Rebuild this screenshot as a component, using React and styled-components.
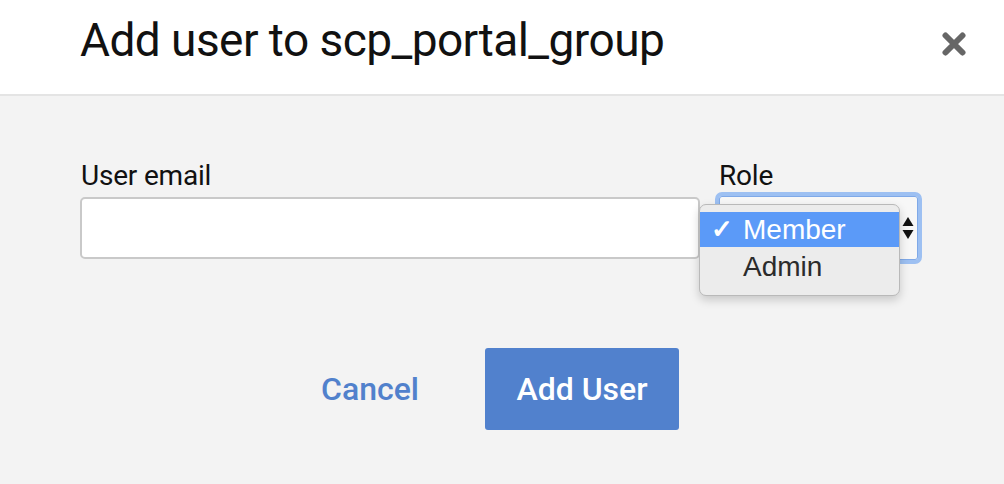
import React from "react";
import styled, { createGlobalStyle } from "styled-components";

const Global = createGlobalStyle`
  html, body { margin: 0; padding: 0; background: #f3f3f3; }
  body { font-family: Roboto, "Noto Sans", sans-serif; }
  * { box-sizing: border-box; }
`;

const Dialog = styled.div`
  width: 1004px;
  height: 484px;
  display: flex;
  flex-direction: column;
  background: #f3f3f3;
  overflow: hidden;
`;

const Header = styled.header`
  height: 96px;
  background: #fff;
  border-bottom: 2px solid #e4e4e4;
  display: flex;
  align-items: flex-start;
  justify-content: space-between;
  padding: 13px 38px 0 80px;
`;

const Title = styled.h1`
  margin: 0;
  font-family: Roboto, sans-serif;
  font-weight: 400;
  font-size: 46px;
  line-height: 54px;
  color: #111;
  letter-spacing: -0.55px;
`;

const CloseButton = styled.button`
  border: 0;
  background: none;
  padding: 0;
  margin-top: 19px;
  width: 24px;
  height: 24px;
  display: flex;
  align-items: center;
  justify-content: center;
  cursor: pointer;
`;

const Body = styled.div`
  flex: 1;
  padding: 64px 80px 0 80px;
  display: flex;
  flex-direction: column;
`;

const FormRow = styled.div`
  display: grid;
  grid-template-columns: 620px 203px;
  column-gap: 18px;
  align-items: start;
`;

const Field = styled.div`
  display: flex;
  flex-direction: column;
  position: relative;
`;

const Label = styled.label`
  font-size: 28px;
  color: #111;
  margin: 0 0 5px 1px;
  line-height: 32px;
  letter-spacing: -0.2px;
`;

const TextInput = styled.input`
  height: 62px;
  width: 100%;
  border: 2px solid #c9c9c9;
  border-radius: 5px;
  background: #fff;
  font-size: 24px;
  padding: 0 12px;
  outline: none;
`;

const SelectRing = styled.div`
  height: 72px;
  margin: -5px -1px -5px -3px;
  border: 4px solid #9dc0f2;
  border-radius: 7px;
  background: #f7f7f7;
  display: flex;
  align-items: center;
  justify-content: flex-end;
  padding-right: 4px;
  box-shadow: inset 0 0 0 1px #7fa9e8;
`;

const Menu = styled.div`
  position: absolute;
  left: -19px;
  top: 44px;
  width: 201px;
  height: 92px;
  background: #ececec;
  border: 1px solid #b9b9b9;
  border-radius: 7px;
  box-shadow: 0 4px 10px rgba(0, 0, 0, 0.18);
  padding-top: 7px;
`;

const MenuItem = styled.div`
  height: ${(p) => (p.$active ? "35px" : "40px")};
  display: flex;
  align-items: center;
  background: ${(p) => (p.$active ? "#5b9af8" : "transparent")};
  color: ${(p) => (p.$active ? "#fff" : "#2b2b2b")};
  font-size: 28px;
  font-family: "Liberation Sans", Arial, sans-serif;
  padding-left: 11px;
`;

const Check = styled.span`
  width: 32px;
  font-size: 26px;
  font-weight: 700;
`;

const Actions = styled.div`
  margin-top: 89px;
  display: flex;
  justify-content: center;
  align-items: center;
  gap: 66px;
  padding-right: 4px;
`;

const TextButton = styled.button`
  border: 0;
  background: none;
  color: #5181cc;
  font-family: Roboto, sans-serif;
  font-size: 32px;
  font-weight: 500;
  padding: 0;
  cursor: pointer;
`;

const PrimaryButton = styled.button`
  width: 194px;
  height: 82px;
  border: 0;
  border-radius: 3px;
  background: #5181cd;
  color: #fff;
  font-family: Roboto, sans-serif;
  font-size: 32px;
  font-weight: 500;
  cursor: pointer;
`;

function Arrows() {
  return (
    <svg width="12" height="24" viewBox="0 0 12 24">
      <path d="M6 1 L11.5 10 H0.5 Z" fill="#111" />
      <path d="M6 23 L11.5 14 H0.5 Z" fill="#111" />
    </svg>
  );
}

function CloseIcon() {
  return (
    <svg width="24" height="24" viewBox="0 0 24 24">
      <path d="M3.5 3.5 L20.5 20.5 M20.5 3.5 L3.5 20.5" stroke="#666" strokeWidth="6" strokeLinecap="round" />
    </svg>
  );
}

export default function App() {
  return (
    <>
      <Global />
      <Dialog>
        <Header>
          <Title>Add user to scp_portal_group</Title>
          <CloseButton aria-label="Close">
            <CloseIcon />
          </CloseButton>
        </Header>
        <Body>
          <FormRow>
            <Field>
              <Label>User email</Label>
              <TextInput type="email" />
            </Field>
            <Field>
              <Label>Role</Label>
              <SelectRing>
                <Arrows />
              </SelectRing>
              <Menu>
                <MenuItem $active>
                  <Check>✓</Check>Member
                </MenuItem>
                <MenuItem>
                  <Check />Admin
                </MenuItem>
              </Menu>
            </Field>
          </FormRow>
          <Actions>
            <TextButton>Cancel</TextButton>
            <PrimaryButton>Add User</PrimaryButton>
          </Actions>
        </Body>
      </Dialog>
    </>
  );
}
